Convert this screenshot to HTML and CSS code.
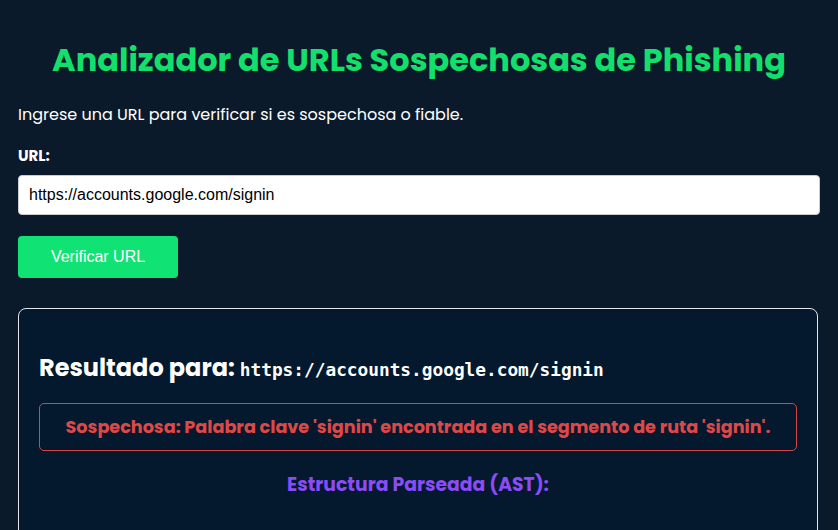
FILE: index.html
```html
<!DOCTYPE html>
<html lang="es">
<head>
<meta charset="utf-8">
<title>Analizador de URLs</title>
<link rel="stylesheet" href="styles.css">
</head>
<body>
<main class="page">
  <h1 class="title">Analizador de URLs Sospechosas de Phishing</h1>
  <p class="intro">Ingrese una URL para verificar si es sospechosa o fiable.</p>
  <label class="label" for="url">URL:</label>
  <input class="url-input" id="url" type="text" value="https://accounts.google.com/signin">
  <button class="btn" type="button">Verificar URL</button>
  <section class="result">
    <h2 class="result-title">Resultado para: <code class="result-url">https://accounts.google.com/signin</code></h2>
    <div class="alert">Sospechosa: Palabra clave 'signin' encontrada en el segmento de ruta 'signin'.</div>
    <h3 class="ast-title">Estructura Parseada (AST):</h3>
  </section>
</main>
</body>
</html>
```

FILE: styles.css
```css
* { box-sizing: border-box; }
html, body { margin: 0; padding: 0; }
body {
  background: #0b1a2b;
  color: #ffffff;
  font-family: "Poppins", "Inter", "Open Sans", sans-serif;
  overflow: hidden;
}
.page {
  padding: 0 18px;
  display: flex;
  flex-direction: column;
  align-items: flex-start;
}
.title {
  align-self: stretch;
  margin: 38px 0 0;
  text-align: center;
  color: #13e06c;
  font-size: 32px;
  font-weight: 700;
  line-height: 44px;
}
.intro {
  margin: 21px 0 0;
  font-size: 16px;
  line-height: 24px;
}
.label {
  margin-top: 18px;
  font-size: 15px;
  font-weight: 700;
  line-height: 22px;
}
.url-input {
  margin-top: 8px;
  width: 802px;
  height: 40px;
  padding: 0 10px;
  border: 1px solid #cccccc;
  border-radius: 4px;
  background: #ffffff;
  color: #000000;
  font-family: "Liberation Sans", Arial, sans-serif;
  font-size: 16px;
}
.btn {
  margin-top: 21px;
  width: 160px;
  height: 42px;
  border: none;
  border-radius: 4px;
  background: #10e374;
  color: #ffffff;
  font-family: "Liberation Sans", Arial, sans-serif;
  font-size: 16px;
}
.result {
  margin-top: 30px;
  width: 800px;
  border: 1px solid #e6e6e6;
  border-radius: 8px;
  background: #04192d;
  padding: 37px 20px 40px;
}
.result-title {
  margin: 0;
  font-size: 24px;
  font-weight: 700;
  line-height: 44px;
  display: flex;
  align-items: baseline;
  gap: 5px;
}
.result-url {
  font-family: "DejaVu Sans Mono", "Liberation Mono", monospace;
  font-size: 17.8px;
  font-weight: 700;
}
.alert {
  margin-top: 11px;
  border: 1px solid #d64545;
  border-radius: 5px;
  padding: 12px 10px;
  text-align: center;
  color: #e04848;
  font-size: 17.6px;
  font-weight: 700;
  line-height: 22px;
}
.ast-title {
  margin: 21px 0 0;
  text-align: center;
  color: #8b4cf7;
  font-size: 18.8px;
  font-weight: 700;
  line-height: 26px;
}
```
